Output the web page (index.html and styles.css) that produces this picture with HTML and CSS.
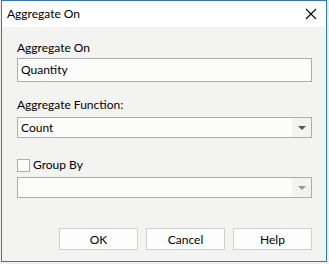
FILE: index.html
```html
<!DOCTYPE html>
<html>
<head>
  <meta charset="UTF-8" />
  <title>Aggregate On</title>
  <link rel="stylesheet" href="styles.css">
</head>
<body>

<div class="dialog">
  <div class="title-bar">
    <span class="title">Aggregate On</span>
    <svg class="close" width="12" height="12" viewBox="0 0 12 12">
      <path d="M1 1 L11 11 M11 1 L1 11" stroke="#000" stroke-width="1.1" fill="none" />
    </svg>
  </div>

  <div class="content">
    <label class="field-label" for="aggOn">Aggregate On</label>
    <div class="text-box" id="aggOn">Quantity</div>

    <label class="field-label second">Aggregate Function:</label>
    <div class="combo">
      <span class="combo-value">Count</span>
      <span class="combo-button"><span class="arrow"></span></span>
    </div>

    <div class="check-row">
      <span class="check-box"></span>
      <span class="check-label">Group By</span>
    </div>
    <div class="combo disabled">
      <span class="combo-value"></span>
      <span class="combo-button"><span class="arrow"></span></span>
    </div>

    <div class="buttons">
      <button>OK</button>
      <button>Cancel</button>
      <button>Help</button>
    </div>
  </div>
</div>

</body>
</html>
```

FILE: styles.css
```css
body {
  margin: 0;
  padding: 0;
  background-color: #f0f0f0;
  font-family: "Segoe UI", Lato, "Open Sans", sans-serif;
  font-size: 12px;
  color: #000000;
}
.dialog {
  width: 324px;
  height: 260px;
  margin-left: 1px;
  border: 1px solid #2a77d0;
  background-color: #f3f4f2;
  display: flex;
  flex-direction: column;
}
.title-bar {
  height: 26px;
  background-color: #ffffff;
  display: flex;
  align-items: center;
  justify-content: space-between;
  padding: 0 9px 0 5px;
}
.title {
  font-size: 12px;
  line-height: 16px;
}
.content {
  padding: 13px 14px 0 15px;
}
.field-label {
  display: block;
  line-height: 16px;
  margin-bottom: 2px;
}
.field-label.second {
  margin-top: 15px;
  margin-bottom: 4px;
}
.text-box {
  height: 22px;
  line-height: 22px;
  border: 1px solid #adadad;
  background-color: #fcfdfb;
  padding-left: 3px;
}
.combo {
  height: 19px;
  border: 1px solid #adadad;
  background-color: #fcfdfb;
  display: flex;
  align-items: center;
}
.combo-value {
  flex: 1;
  padding-left: 3px;
  line-height: 19px;
}
.combo-button {
  width: 19px;
  height: 19px;
  background-color: #f3f4f2;
  display: flex;
  align-items: center;
  justify-content: center;
}
.arrow {
  width: 0;
  height: 0;
  border-left: 4px solid transparent;
  border-right: 4px solid transparent;
  border-top: 4px solid #555555;
}
.combo.disabled .arrow {
  border-top-color: #9a9a9a;
}
.check-row {
  display: flex;
  align-items: center;
  height: 16px;
  margin-top: 19px;
  margin-bottom: 4px;
}
.check-box {
  width: 11px;
  height: 11px;
  border: 1px solid #adadad;
  background-color: #fcfdfb;
  margin-right: 3px;
}
.check-label {
  line-height: 16px;
}
.buttons {
  display: flex;
  justify-content: flex-end;
  gap: 8px;
  margin-top: 30px;
}
button {
  width: 79px;
  height: 22px;
  padding: 0;
  border: 1px solid #d0d0d0;
  background-color: #fdfdfd;
  font-family: inherit;
  font-size: 12px;
  color: #000000;
}
```
